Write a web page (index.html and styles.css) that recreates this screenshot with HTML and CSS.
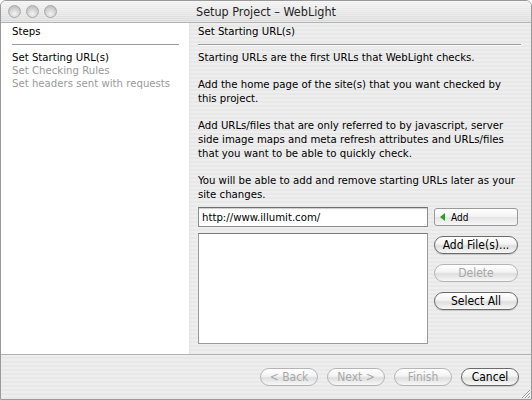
FILE: index.html
```html
<!DOCTYPE html>
<html lang="en">
<head>
    <meta charset="UTF-8">
    <title>Setup Project – WebLight</title>
    <link rel="stylesheet" href="styles.css">
</head>
<body>
    <div class="window">
        <div class="titlebar">
            <div class="lights">
                <span class="light"></span>
                <span class="light"></span>
                <span class="light"></span>
            </div>
            <div class="title">Setup Project – WebLight</div>
        </div>

        <div class="content">
            <div class="steps">
                <div class="section-head">Steps</div>
                <ul class="step-list">
                    <li class="current">Set Starting URL(s)</li>
                    <li>Set Checking Rules</li>
                    <li>Set headers sent with requests</li>
                </ul>
            </div>

            <div class="page">
                <div class="section-head">Set Starting URL(s)</div>
                <p>Starting URLs are the first URLs that WebLight checks.</p>
                <p>Add the home page of the site(s) that you want checked by this project.</p>
                <p>Add URLs/files that are only referred to by javascript, server side image maps and meta refresh attributes and URLs/files that you want to be able to quickly check.</p>
                <p>You will be able to add and remove starting URLs later as your site changes.</p>

                <div class="url-row">
                    <input type="text" class="url-input" value="http://www.illumit.com/">
                    <button class="bevel-button"><span class="arrow"></span>Add</button>
                </div>
                <div class="list-row">
                    <div class="url-list"></div>
                    <div class="list-buttons">
                        <button class="pill">Add File(s)...</button>
                        <button class="pill" disabled>Delete</button>
                        <button class="pill">Select All</button>
                    </div>
                </div>
            </div>
        </div>

        <div class="footer">
            <button class="pill" disabled>&lt; Back</button>
            <button class="pill" disabled>Next &gt;</button>
            <button class="pill" disabled>Finish</button>
            <button class="pill">Cancel</button>
            <svg class="grip" width="12" height="12" viewBox="0 0 12 12">
                <path d="M11 3 L3 11 M11 6 L6 11 M11 9 L9 11" stroke="#999" stroke-width="1"/>
                <path d="M11 4 L4 11 M11 7 L7 11" stroke="#fff" stroke-width="1"/>
            </svg>
        </div>
    </div>
</body>
</html>
```

FILE: styles.css
```css
body {
    margin: 0;
    background: #fff;
    font-family: 'DejaVu Sans Condensed', 'DejaVu Sans', sans-serif;
    font-size: 11.3px;
    color: #000;
}
.window {
    width: 530px;
    height: 398px;
    border: 1px solid #9a9a9a;
    border-radius: 6px 6px 0 0;
    overflow: hidden;
    display: flex;
    flex-direction: column;
    background: #ececec;
}
.titlebar {
    height: 21px;
    flex: none;
    position: relative;
    border-bottom: 1px solid #b4b4b4;
    background: repeating-linear-gradient(rgba(255, 255, 255, 0.35) 0, rgba(255, 255, 255, 0.35) 1px, transparent 1px, transparent 2px),
                linear-gradient(#f2f2f2, #dadada);
    display: flex;
    align-items: center;
    justify-content: center;
}
.lights {
    position: absolute;
    left: 7px;
    top: 4px;
    display: flex;
    gap: 5px;
}
.light {
    width: 11px;
    height: 11px;
    border-radius: 50%;
    border: 1px solid #a8a8a8;
    background: radial-gradient(circle at 50% 70%, #f4f4f4, #c6c6c6 70%, #b0b0b0);
}
.title {
    font-size: 12.5px;
    color: #262626;
}
.content {
    flex: 1;
    display: flex;
    min-height: 0;
}
.steps {
    width: 189px;
    box-sizing: border-box;
    flex: none;
    background: #fff;
    padding: 0 10px 0 11px;
    border-right: 1px solid #e2e2e2;
}
.section-head {
    padding: 2px 0 5px;
    line-height: 14px;
    border-bottom: 1px solid #9c9c9c;
    box-shadow: 0 1px 0 #fff;
}
.step-list {
    list-style: none;
    margin: 6px 0 0;
    padding: 0;
    line-height: 13px;
    color: #9a9a9a;
}
.step-list .current {
    color: #000;
}
.page {
    flex: 1;
    padding: 0 10px 0 8px;
    background: repeating-linear-gradient(#eeeeee 0, #eeeeee 2px, #e8e8e8 2px, #e8e8e8 4px);
}
.page p {
    margin: 6px 0 13px;
    line-height: 14px;
}
.page p + p {
    margin-top: 0;
}
.page p:last-of-type {
    margin-bottom: 5px;
}
.url-row {
    display: flex;
    align-items: center;
    gap: 6px;
}
.url-input {
    width: 230px;
    height: 20px;
    box-sizing: border-box;
    border: 1px solid #8e8e8e;
    border-top-color: #6e6e6e;
    box-shadow: inset 0 1px 1px #ccc;
    padding: 0 3px;
    font-family: inherit;
    font-size: 11.3px;
    margin: 0;
}
.bevel-button {
    width: 84px;
    height: 18px;
    border: 1px solid #9a9a9a;
    border-radius: 3px;
    background: linear-gradient(#ffffff, #f2f2f2 50%, #e4e4e4 51%, #f6f6f6);
    font-family: inherit;
    font-size: 10px;
    text-align: left;
    padding: 0 0 0 5px;
    display: flex;
    align-items: center;
    gap: 6px;
    margin: 0;
}
.arrow {
    width: 0;
    height: 0;
    border-top: 4px solid transparent;
    border-bottom: 4px solid transparent;
    border-right: 5px solid #2d9d2d;
}
.list-row {
    display: flex;
    gap: 6px;
    margin-top: 6px;
}
.url-list {
    width: 230px;
    height: 111px;
    box-sizing: border-box;
    background: #fff;
    border: 1px solid #9a9a9a;
    border-top-color: #7a7a7a;
}
.list-buttons {
    display: flex;
    flex-direction: column;
    gap: 10px;
    padding-top: 3px;
}
.pill {
    width: 84px;
    height: 18px;
    border: 1px solid #6a6a6a;
    border-radius: 10px;
    background: linear-gradient(#ffffff, #f3f3f3 45%, #dedede 55%, #f7f7f7);
    box-shadow: 0 1px 1px rgba(0, 0, 0, 0.15);
    font-family: inherit;
    font-size: 12px;
    color: #000;
    padding: 0;
    margin: 0;
}
.pill:disabled {
    border-color: #b5b5b5;
    color: #a8a8a8;
    box-shadow: none;
}
.footer {
    height: 44px;
    flex: none;
    border-top: 1px solid #b4b4b4;
    background: repeating-linear-gradient(#eeeeee 0, #eeeeee 2px, #e8e8e8 2px, #e8e8e8 4px);
    display: flex;
    justify-content: flex-end;
    align-items: center;
    gap: 9px;
    padding: 0 12px 0 0;
    position: relative;
}
.footer .pill {
    width: 58px;
}
.grip {
    position: absolute;
    right: 0;
    bottom: 0;
}
```
